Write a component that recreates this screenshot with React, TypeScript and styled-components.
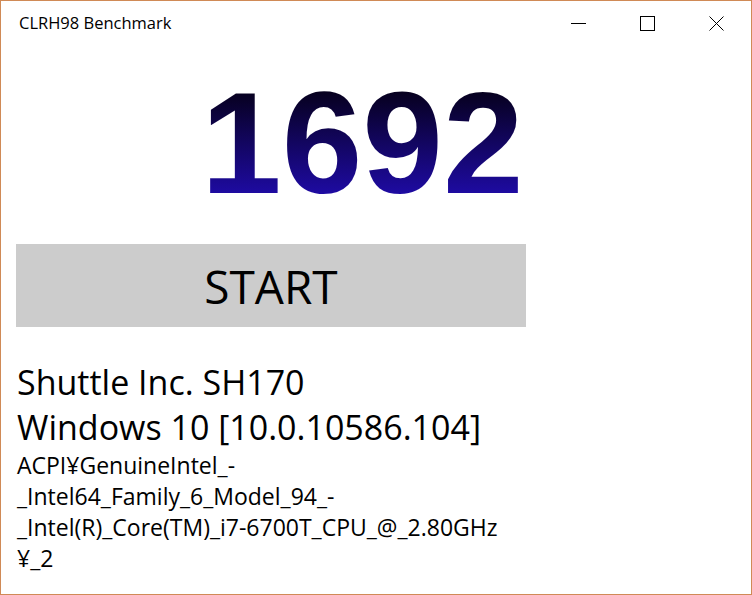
import React from "react";
import styled, { createGlobalStyle } from "styled-components";

const GlobalStyle = createGlobalStyle`
  html, body {
    margin: 0;
    padding: 0;
    background: #ffffff;
  }
  * {
    box-sizing: border-box;
  }
`;

const uiFont = `"Segoe UI", "Open Sans", "Noto Sans", sans-serif`;

const Window = styled.div`
  width: 752px;
  height: 595px;
  border: 1px solid #d08a56;
  background: #ffffff;
  display: flex;
  flex-direction: column;
  overflow: hidden;
  font-family: ${uiFont};
  color: #000000;
`;

const TitleBar = styled.div`
  height: 45px;
  display: flex;
  align-items: stretch;
  flex-shrink: 0;
`;

const Title = styled.div`
  flex: 1;
  padding: 11px 0 0 18px;
  font-size: 16.5px;
  line-height: 22px;
  color: #000000;
`;

const CaptionButton = styled.button`
  width: 69px;
  height: 45px;
  border: none;
  background: transparent;
  padding: 0;
  display: flex;
  align-items: center;
  justify-content: center;
  cursor: default;
`;

const Content = styled.div`
  display: flex;
  flex-direction: column;
  padding-left: 15px;
`;

const ScoreRow = styled.div`
  margin-top: 25px;
  height: 145px;
  padding-left: 185px;
  display: flex;
`;

const Score = styled.span`
  font-family: "Liberation Sans", Arial, sans-serif;
  font-weight: 700;
  font-size: 145px;
  line-height: 145px;
  background: linear-gradient(180deg, #06001a 12%, #1f0ba8 88%);
  -webkit-background-clip: text;
  background-clip: text;
  color: transparent;
`;

const StartButton = styled.button`
  margin-top: 28px;
  width: 510px;
  height: 83px;
  border: none;
  background: #cccccc;
  font-family: ${uiFont};
  font-size: 46px;
  color: #000000;
  padding: 0;
  cursor: default;
`;

const Info = styled.div`
  margin-top: 33px;
  padding-left: 1px;
`;

const Line = styled.div<{ $big?: boolean }>`
  white-space: nowrap;
  font-size: ${(p) => (p.$big ? "34px" : "23px")};
  line-height: ${(p) => (p.$big ? "45px" : "31px")};
`;

const deviceLines = [
  "ACPI\u00a5GenuineIntel_-",
  "_Intel64_Family_6_Model_94_-",
  "_Intel(R)_Core(TM)_i7-6700T_CPU_@_2.80GHz",
  "\u00a5_2",
];

export default function App() {
  return (
    <>
      <GlobalStyle />
      <Window>
        <TitleBar>
          <Title>CLRH98 Benchmark</Title>
          <CaptionButton aria-label="minimize">
            <svg width="15" height="15" viewBox="0 0 15 15">
              <line x1="0" y1="7.5" x2="15" y2="7.5" stroke="#000" strokeWidth="1" />
            </svg>
          </CaptionButton>
          <CaptionButton aria-label="maximize">
            <svg width="15" height="15" viewBox="0 0 15 15">
              <rect x="0.5" y="0.5" width="14" height="14" fill="none" stroke="#000" strokeWidth="1" />
            </svg>
          </CaptionButton>
          <CaptionButton aria-label="close">
            <svg width="15" height="15" viewBox="0 0 15 15">
              <path d="M0.5 0.5 L14.5 14.5 M14.5 0.5 L0.5 14.5" stroke="#000" strokeWidth="1" fill="none" />
            </svg>
          </CaptionButton>
        </TitleBar>
        <Content>
          <ScoreRow>
            <Score>1692</Score>
          </ScoreRow>
          <StartButton>START</StartButton>
          <Info>
            <Line $big>Shuttle Inc. SH170</Line>
            <Line $big>Windows 10 [10.0.10586.104]</Line>
            {deviceLines.map((l) => (
              <Line key={l}>{l}</Line>
            ))}
          </Info>
        </Content>
      </Window>
    </>
  );
}
